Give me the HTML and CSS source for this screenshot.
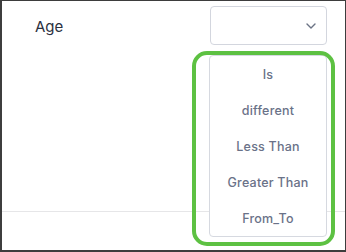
FILE: index.html
```html
<!DOCTYPE html>
<html lang="en">
<head>
  <meta charset="UTF-8">
  <meta name="viewport" content="width=device-width, initial-scale=1.0">
  <title>Filter</title>
  <link rel="stylesheet" href="styles.css">
</head>
<body>
  <div class="frame">
    <!-- Field row -->
    <div class="section">
      <div class="row">
        <span class="label">Age</span>
        <div class="select">
          <svg class="chevron" width="10" height="6" viewBox="0 0 10 6">
            <path d="M1 1l4 4 4-4" fill="none" stroke="#6b7385" stroke-width="1.4" stroke-linecap="round" stroke-linejoin="round"/>
          </svg>
        </div>
      </div>
    </div>

    <!-- Open options list -->
    <ul class="options">
      <li>Is</li>
      <li>different</li>
      <li>Less Than</li>
      <li>Greater Than</li>
      <li>From_To</li>
    </ul>

    <!-- Highlight marker -->
    <div class="highlight"></div>
  </div>
</body>
</html>
```

FILE: styles.css
```css
body {
  margin: 0;
  padding: 0;
  font-family: Inter, "Noto Sans", sans-serif;
  background-color: #ffffff;
}

.frame {
  position: relative;
  width: 346px;
  height: 252px;
  box-sizing: border-box;
  border-style: solid;
  border-color: #3d3d3d;
  border-width: 1px 1px 2px 2px;
  background-color: #ffffff;
  overflow: hidden;
}

.section {
  height: 210px;
  border-bottom: 1px solid #e6e6e8;
}

.row {
  display: flex;
  justify-content: space-between;
  align-items: center;
  padding: 5px 18px 0 33px;
}

.label {
  font-size: 15px;
  color: #2b3140;
  margin-top: 1px;
}

.select {
  width: 117px;
  height: 39px;
  box-sizing: border-box;
  border: 1px solid #d3d6de;
  border-radius: 4px;
  display: flex;
  align-items: center;
  justify-content: flex-end;
  padding-right: 10px;
}

.chevron {
  display: block;
}

.options {
  position: absolute;
  left: 207px;
  top: 54px;
  width: 118px;
  height: 182px;
  box-sizing: border-box;
  margin: 0;
  padding: 0;
  list-style: none;
  background-color: #ffffff;
  border: 1px solid #d6d9e0;
  border-radius: 4px;
}

.options li {
  height: 36.2px;
  display: flex;
  align-items: center;
  justify-content: center;
  font-size: 12.5px;
  font-weight: 500;
  letter-spacing: 0.2px;
  color: #6a7288;
}

.highlight {
  position: absolute;
  left: 190px;
  top: 50px;
  width: 143px;
  height: 195px;
  box-sizing: border-box;
  border: 4.5px solid #5dc142;
  border-radius: 15px;
}
```
